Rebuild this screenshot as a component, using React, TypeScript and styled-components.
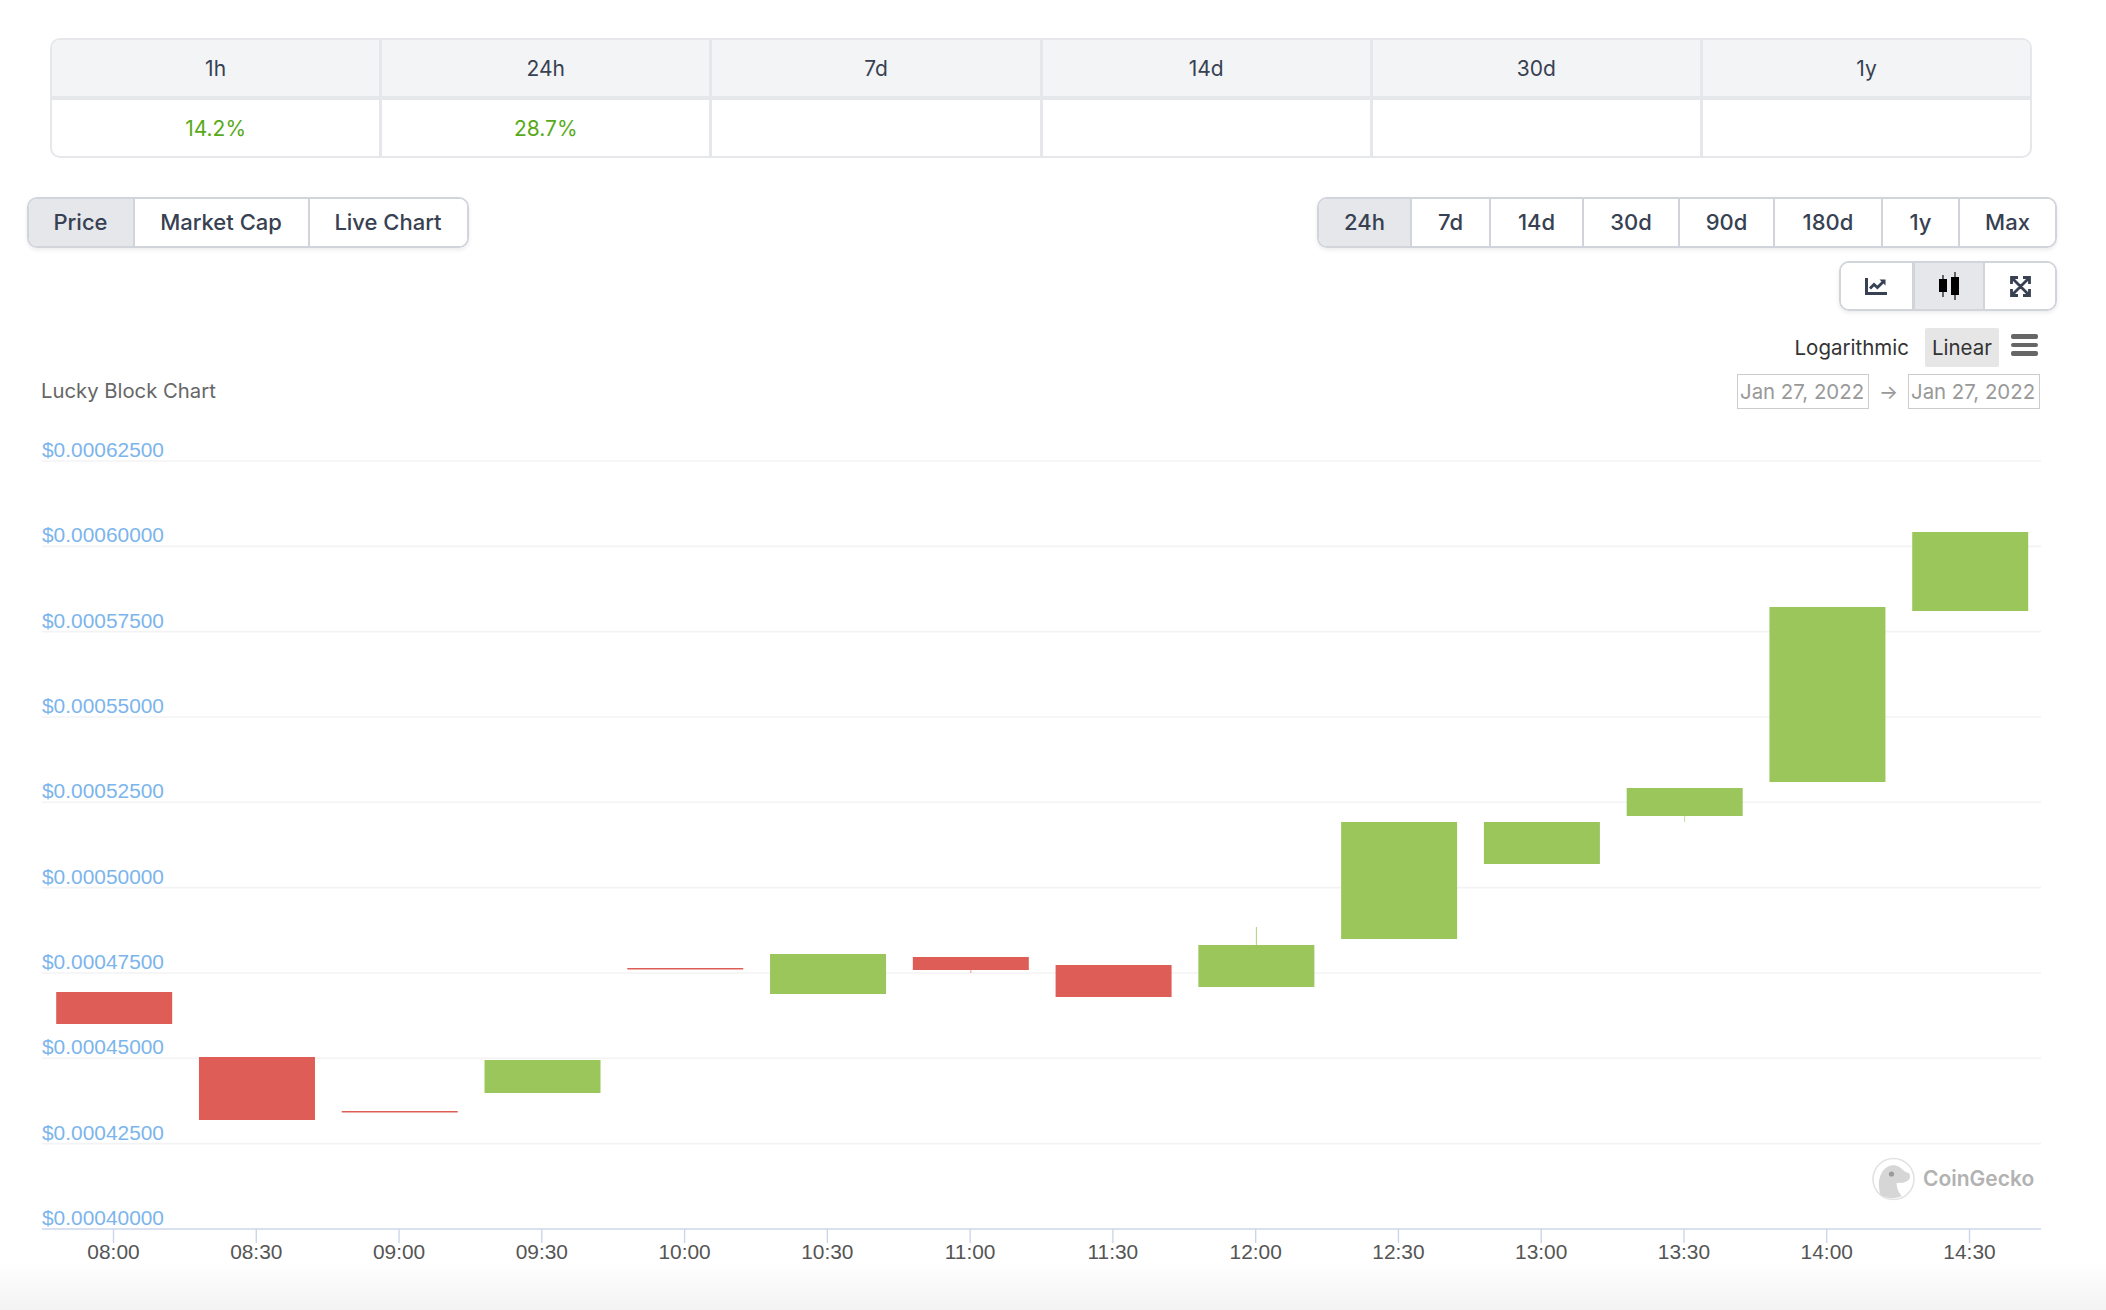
import React from "react";
import styled, { createGlobalStyle } from "styled-components";

const GlobalStyle = createGlobalStyle`
  html, body {
    margin: 0;
    padding: 0;
    background: #fff;
  }
  body {
    font-family: Inter, "Liberation Sans", sans-serif;
    color: #374151;
  }
`;

const Page = styled.div`
  width: 2106px;
  height: 1310px;
  overflow: hidden;
  padding-top: 38px;
  box-sizing: border-box;
  display: flex;
  flex-direction: column;
`;

const StatsTable = styled.div`
  margin: 0 74px 0 50px;
  display: grid;
  grid-template-columns: repeat(5, 330.2px) 1fr;
  grid-template-rows: 60px 56px;
  border: 2px solid #e5e7eb;
  border-radius: 10px;
  overflow: hidden;
`;

const HeadCell = styled.div<{ $last?: boolean }>`
  display: flex;
  align-items: center;
  justify-content: center;
  background: #f3f4f6;
  border-right: ${(p) => (p.$last ? "none" : "3px solid #e5e7eb")};
  border-bottom: 4px solid #e5e7eb;
  font-size: 21px;
  color: #374151;
`;

const ValueCell = styled.div<{ $last?: boolean }>`
  display: flex;
  align-items: center;
  justify-content: center;
  border-right: ${(p) => (p.$last ? "none" : "3px solid #e5e7eb")};
  font-size: 21px;
  color: #58aa18;
`;

const ControlsRow = styled.div`
  margin: 38.5px 49px 0 26.5px;
  display: flex;
  justify-content: space-between;
`;

const ButtonGroup = styled.div`
  display: inline-flex;
  height: 51px;
  box-sizing: border-box;
  border: 2px solid #d1d5db;
  border-radius: 10px;
  overflow: hidden;
  box-shadow: 0 2px 4px rgba(0, 0, 0, 0.08);
`;

const GroupButton = styled.button<{ $active?: boolean; $first?: boolean; $width: number }>`
  appearance: none;
  border: none;
  border-left: ${(p) => (p.$first ? "none" : "2px solid #d1d5db")};
  margin: 0;
  padding: 0;
  width: ${(p) => p.$width}px;
  background: ${(p) => (p.$active ? "#e5e7eb" : "#fff")};
  color: #374151;
  font-family: inherit;
  font-size: 22px;
  font-weight: 500;
  white-space: nowrap;
`;

const IconRow = styled.div`
  margin: 13.5px 49px 0 0;
  display: flex;
  justify-content: flex-end;
`;

const IconGroup = styled(ButtonGroup)`
  height: 50px;
`;

const IconButton = styled.button<{ $active?: boolean; $first?: boolean }>`
  appearance: none;
  border: none;
  border-left: ${(p) => (p.$first ? "none" : p.$active ? "3px solid #d1d5db" : "2px solid #d1d5db")};
  width: ${(p) => (p.$first ? "71px" : p.$active ? "71px" : "72px")};
  padding: ${(p) => (p.$first ? "0 2px 0 0" : "0")};
  display: flex;
  align-items: center;
  justify-content: center;
  background: ${(p) => (p.$active ? "#e5e7eb" : "#fff")};
`;

const ScaleRow = styled.div`
  margin: 17px 68px 0 0;
  display: flex;
  justify-content: flex-end;
  align-items: flex-start;
  height: 39px;
`;

const ScaleButton = styled.div<{ $active?: boolean }>`
  height: 39px;
  padding: 0 7px;
  margin-left: 9px;
  display: flex;
  align-items: center;
  border-radius: 2px;
  background: ${(p) => (p.$active ? "#e6e6e6" : "transparent")};
  color: #333;
  font-size: 20.5px;
`;

const MenuIcon = styled.div`
  margin: 6px 0 0 12px;
  width: 27px;
  display: flex;
  flex-direction: column;
  gap: 4px;
`;

const MenuBar = styled.span`
  height: 4.5px;
  border-radius: 2px;
  background: #666;
`;

const TitleRow = styled.div`
  margin: 7px 66px 0 41px;
  height: 35px;
  display: flex;
  justify-content: space-between;
  align-items: center;
`;

const ChartTitle = styled.div`
  font-size: 20.3px;
  color: #666;
  margin-bottom: 2px;
`;

const DateRange = styled.div`
  display: flex;
  align-items: center;
`;

const DateField = styled.div`
  width: 132px;
  height: 35px;
  box-sizing: border-box;
  border: 1.5px solid #ccc;
  padding-left: 2px;
  display: flex;
  align-items: center;
  font-size: 20.4px;
  color: #999;
  white-space: nowrap;
`;

const DateArrow = styled.div`
  width: 39px;
  text-align: center;
  font-size: 20px;
  color: #999;
`;

const ChartSvg = styled.svg`
  display: block;
  width: 2106px;
  height: 853px;
  flex: none;
`;

const AxisText = styled.text`
  font-family: "Liberation Sans", Arial, sans-serif;
  font-size: 20.9px;
`;

const WatermarkText = styled.text`
  font-family: Inter, "Liberation Sans", sans-serif;
  font-size: 21px;
  font-weight: 600;
  fill: #b2b2b2;
`;

const PageFoot = styled.div`
  flex: 1;
  background: linear-gradient(#fff, #f3f3f3);
`;

const GREEN = "#9bc65b";
const RED = "#de5e57";
const PERIODS = ["1h", "24h", "7d", "14d", "30d", "1y"];
const CHANGES = ["14.2%", "28.7%", "", "", "", ""];
const VIEWS = [
  { label: "Price", width: 104 },
  { label: "Market Cap", width: 175 },
  { label: "Live Chart", width: 159 },
];
const RANGES = [
  { label: "24h", width: 91 },
  { label: "7d", width: 79 },
  { label: "14d", width: 93 },
  { label: "30d", width: 96 },
  { label: "90d", width: 95 },
  { label: "180d", width: 108 },
  { label: "1y", width: 77 },
  { label: "Max", width: 97 },
];
const TIMES = ["08:00", "08:30", "09:00", "09:30", "10:00", "10:30", "11:00", "11:30", "12:00", "12:30", "13:00", "13:30", "14:00", "14:30"];
const PRICES = ["$0.00062500", "$0.00060000", "$0.00057500", "$0.00055000", "$0.00052500", "$0.00050000", "$0.00047500", "$0.00045000", "$0.00042500", "$0.00040000"];

// chart coordinates, 0 is the top of the svg (y=409 on the page)
const TOP = 409;
const gridY = (i: number) => 461 + i * 85.33 - TOP;
const tickX = (i: number) => 113.5 + i * 142.77;

const CANDLES = [
  { top: 992, bottom: 1024, color: RED },
  { top: 1057, bottom: 1120, color: RED },
  { top: 1111, bottom: 1112.5, color: RED },
  { top: 1060, bottom: 1093, color: GREEN },
  { top: 968, bottom: 969.5, color: RED },
  { top: 954, bottom: 994, color: GREEN },
  { top: 957, bottom: 970, color: RED, wickBottom: 973 },
  { top: 965, bottom: 997, color: RED },
  { top: 945, bottom: 987, color: GREEN, wickTop: 927 },
  { top: 822, bottom: 939, color: GREEN },
  { top: 822, bottom: 864, color: GREEN },
  { top: 788, bottom: 816, color: GREEN, wickBottom: 822 },
  { top: 607, bottom: 782, color: GREEN },
  { top: 532, bottom: 611, color: GREEN },
];

const LineIcon = () => (
  <svg width="22" height="17" viewBox="0 0 22 17" fill="none">
    <path d="M1.5 0v15.4H22" stroke="#374151" strokeWidth="3" />
    <path d="M5 10.5l4-4 3.4 3L18 4" stroke="#374151" strokeWidth="2.8" />
    <path d="M14.5 1.5H20.5V7.5z" fill="#374151" />
  </svg>
);

const CandleIcon = () => (
  <svg width="22" height="28" viewBox="0 0 22 28" fill="none">
    <path d="M5 3v22M17 0v28" stroke="#555" strokeWidth="1.8" />
    <rect x="1" y="7" width="8" height="13" fill="#000" />
    <rect x="13" y="5" width="8" height="18" fill="#000" />
  </svg>
);

const ExpandIcon = () => (
  <svg width="21" height="21" viewBox="0 0 21 21" fill="none">
    <path
      d="M2.5 2.5l16 16M18.5 2.5l-16 16M1.5 8V1.5H8M13 1.5h6.5V8M19.5 13v6.5H13M8 19.5H1.5V13"
      stroke="#374151"
      strokeWidth="2.8"
    />
  </svg>
);

const Watermark = () => (
  <g transform="translate(1893.5 770)">
    <circle r="20.5" fill="#fff" stroke="#e2e2e2" strokeWidth="1.6" />
    <path
      d="M-13 16C-16 6-15-4-9-10c4-4 10-5 15-2 3 2 5 5 9 6 2 1 2 5 0 7-3 3-8 3-12 3 0 5 2 9 5 13-5 3-14 3-21-1z"
      fill="#d6d6d6"
    />
    <circle cx="-2" cy="-5" r="2.6" fill="#9a9a9a" />
    <WatermarkText x="29.5" y="6.5">
      CoinGecko
    </WatermarkText>
  </g>
);

const App: React.FC = () => {
  return (
    <Page>
      <GlobalStyle />
      <StatsTable>
        {PERIODS.map((p, i) => (
          <HeadCell key={p} $last={i === PERIODS.length - 1}>
            {p}
          </HeadCell>
        ))}
        {CHANGES.map((c, i) => (
          <ValueCell key={i} $last={i === CHANGES.length - 1}>
            {c}
          </ValueCell>
        ))}
      </StatsTable>

      <ControlsRow>
        <ButtonGroup>
          {VIEWS.map((v, i) => (
            <GroupButton key={v.label} $width={v.width} $first={i === 0} $active={i === 0}>
              {v.label}
            </GroupButton>
          ))}
        </ButtonGroup>
        <ButtonGroup>
          {RANGES.map((r, i) => (
            <GroupButton key={r.label} $width={r.width} $first={i === 0} $active={i === 0}>
              {r.label}
            </GroupButton>
          ))}
        </ButtonGroup>
      </ControlsRow>

      <IconRow>
        <IconGroup>
          <IconButton $first>
            <LineIcon />
          </IconButton>
          <IconButton $active>
            <CandleIcon />
          </IconButton>
          <IconButton>
            <ExpandIcon />
          </IconButton>
        </IconGroup>
      </IconRow>

      <ScaleRow>
        <ScaleButton>Logarithmic</ScaleButton>
        <ScaleButton $active>Linear</ScaleButton>
        <MenuIcon>
          <MenuBar />
          <MenuBar />
          <MenuBar />
        </MenuIcon>
      </ScaleRow>

      <TitleRow>
        <ChartTitle>Lucky Block Chart</ChartTitle>
        <DateRange>
          <DateField>Jan 27, 2022</DateField>
          <DateArrow>→</DateArrow>
          <DateField>Jan 27, 2022</DateField>
        </DateRange>
      </TitleRow>

      <ChartSvg viewBox="0 0 2106 853">
        {PRICES.map((p, i) => (
          <g key={p}>
            {i < PRICES.length - 1 && (
              <line x1="42" x2="2041" y1={gridY(i)} y2={gridY(i)} stroke="#f3f3f3" strokeWidth="1.6" />
            )}
            <AxisText x="42" y={gridY(i) - 4} fill="#7cb5ec">
              {p}
            </AxisText>
          </g>
        ))}

        <line x1="42" x2="2041" y1={gridY(9)} y2={gridY(9)} stroke="#ccd6eb" strokeWidth="1.6" />
        {TIMES.map((t, i) => (
          <g key={t}>
            <line x1={tickX(i)} x2={tickX(i)} y1={gridY(9)} y2={gridY(9) + 14} stroke="#ccd6eb" strokeWidth="1.4" />
            <AxisText x={tickX(i)} y={1259 - TOP} fill="#555" textAnchor="middle">
              {t}
            </AxisText>
          </g>
        ))}

        {CANDLES.map((c, i) => {
          const cx = tickX(i) + 0.7;
          return (
            <g key={i}>
              {c.wickTop && <line x1={cx} x2={cx} y1={c.wickTop - TOP} y2={c.top - TOP} stroke={c.color} strokeWidth="1" opacity="0.8" />}
              {c.wickBottom && <line x1={cx} x2={cx} y1={c.bottom - TOP} y2={c.wickBottom - TOP} stroke={c.color} strokeWidth="1" opacity="0.6" />}
              <rect x={cx - 58} y={c.top - TOP} width="116" height={c.bottom - c.top} fill={c.color} />
            </g>
          );
        })}

        <Watermark />
      </ChartSvg>
      <PageFoot />
    </Page>
  );
};

export default App;
